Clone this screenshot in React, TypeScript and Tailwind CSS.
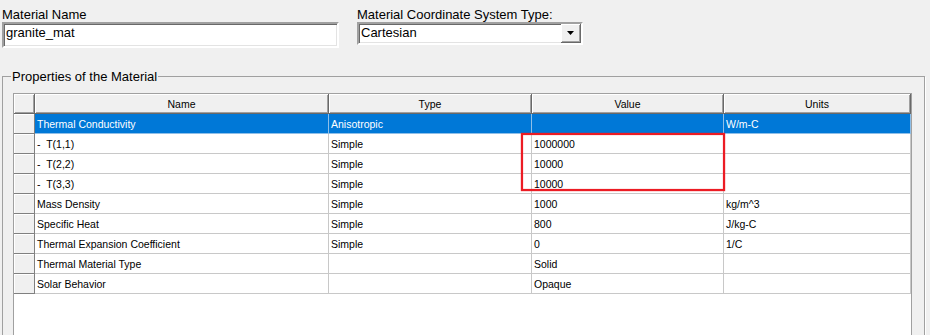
import React from "react";

type Row = { name: string; type: string; value: string; units: string; selected?: boolean };

const ROWS: Row[] = [
  { name: "Thermal Conductivity", type: "Anisotropic", value: "", units: "W/m-C", selected: true },
  { name: "-  T(1,1)", type: "Simple", value: "1000000", units: "" },
  { name: "-  T(2,2)", type: "Simple", value: "10000", units: "" },
  { name: "-  T(3,3)", type: "Simple", value: "10000", units: "" },
  { name: "Mass Density", type: "Simple", value: "1000", units: "kg/m^3" },
  { name: "Specific Heat", type: "Simple", value: "800", units: "J/kg-C" },
  { name: "Thermal Expansion Coefficient", type: "Simple", value: "0", units: "1/C" },
  { name: "Thermal Material Type", type: "", value: "Solid", units: "" },
  { name: "Solar Behavior", type: "", value: "Opaque", units: "" },
];

// column widths include the 1px right grid line
const COLS = [
  { label: "Name", w: "w-[294px]" },
  { label: "Type", w: "w-[203px]" },
  { label: "Value", w: "w-[192px]" },
  { label: "Units", w: "w-[187px]" },
];

const sunken =
  "border-2 border-t-[#a0a0a0] border-l-[#a0a0a0] border-b-white border-r-white shadow-[inset_1px_1px_0_#696969,inset_-1px_-1px_0_#e3e3e3] bg-white";

const raised =
  "bg-[#f0f0f0] border-r border-b border-[#696969] shadow-[inset_1px_1px_0_#fff,inset_-1px_-1px_0_#a0a0a0]";

export default function App() {
  return (
    <div className="w-[930px] h-[335px] overflow-hidden bg-[#f0f0f0] text-black font-['Liberation_Sans',Arial,sans-serif]">
      {/* Top fields */}
      <div className="flex pt-[7px] pl-[2px]">
        <div className="w-[337px]">
          <div className="text-[13px] leading-[15px] h-[15px]">Material Name</div>
          <div className={`h-[26px] pl-[2px] pt-[1px] text-[13px] leading-[15px] ${sunken}`}>granite_mat</div>
        </div>
        <div className="ml-[18px] w-[226px]">
          <div className="text-[13px] leading-[15px] h-[15px] whitespace-nowrap">Material Coordinate System Type:</div>
          <div className={`h-[23px] flex ${sunken}`}>
            <div className="flex-1 pl-[2px] pt-[1px] text-[13px] leading-[15px]">Cartesian</div>
            <div className={`w-[20px] h-[19px] flex items-center justify-center ${raised}`}>
              <svg width="7" height="4" viewBox="0 0 7 4">
                <path d="M0 0h7L3.5 4z" fill="#000" />
              </svg>
            </div>
          </div>
        </div>
      </div>

      {/* Group box */}
      <fieldset className="mt-[21px] ml-[2px] mr-[5px] h-[300px] border border-[#a0a0a0] shadow-[1px_1px_0_#fff]">
        <legend className="ml-[8px] px-[1px] text-[13px] leading-[15px]">Properties of the Material</legend>

        <div className="relative mt-[9px] ml-[10px] w-[899px] h-[260px] bg-white border border-[#a0a0a0] text-[10.5px] leading-[12px]">
          {/* Header */}
          <div className="flex">
            <div className={`w-[21px] h-[20px] ${raised}`} />
            {COLS.map((c) => (
              <div key={c.label} className={`${c.w} h-[20px] flex items-center justify-center ${raised}`}>{c.label}</div>
            ))}
          </div>

          {/* Rows */}
          {ROWS.map((r) => {
            const cell = r.selected
              ? "h-[20px] flex items-center pl-[2px] border-r border-b border-[#8fbfe8] bg-[#0078d7] text-white whitespace-pre"
              : "h-[20px] flex items-center pl-[2px] border-r border-b border-[#c8c8c8] whitespace-pre";
            return (
              <div key={r.name} className="flex">
                <div className="w-[21px] h-[20px] bg-[#f0f0f0] border-r border-b border-[#808080] shadow-[inset_1px_1px_0_#fff]" />
                <div className={`w-[294px] ${cell}`}>{r.name}</div>
                <div className={`w-[203px] ${cell}`}>{r.type}</div>
                <div className={`w-[192px] ${cell}`}>{r.value}</div>
                <div className={`w-[187px] ${cell}`}>{r.units}</div>
              </div>
            );
          })}

          {/* Annotation box over the T values */}
          <div className="absolute left-[507px] top-[39px] w-[204px] h-[58px] border-2 border-[#ec1c24] shadow-[0_0_1px_#ec1c24,inset_0_0_1px_#ec1c24] pointer-events-none" />
        </div>
      </fieldset>
    </div>
  );
}
